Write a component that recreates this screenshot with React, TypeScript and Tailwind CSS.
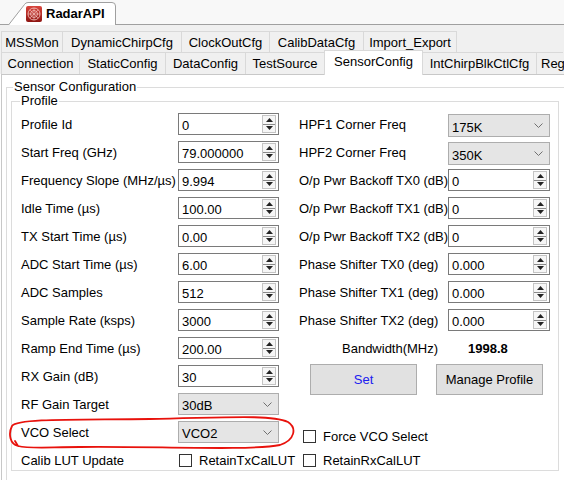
import { Fragment, type ReactNode } from 'react'

function Tri({ down }: { down?: boolean }) {
  return (
    <svg width="7" height="4" viewBox="0 0 7 4">
      <path d={down ? 'M0 0H7L3.5 4Z' : 'M0 4H7L3.5 0Z'} fill="#222" />
    </svg>
  )
}

function Spin({ value }: { value: string }) {
  return (
    <div className="flex h-[22px] w-full items-center border border-[#7a7a7a] bg-white">
      <span className="flex-1 pl-[3px] pt-[2px]">{value}</span>
      <div className="mr-[2px] flex h-[18px] w-[14px] flex-col border border-[#c4c4c4] bg-[#f6f6f6]">
        <div className="flex flex-1 items-center justify-center border-b border-[#8a8a8a]">
          <Tri />
        </div>
        <div className="flex flex-1 items-center justify-center">
          <Tri down />
        </div>
      </div>
    </div>
  )
}

function Combo({ value, hpf }: { value: string; hpf?: boolean }) {
  return (
    <div
      className={
        hpf
          ? 'mt-[3px] flex h-[23px] w-full items-center justify-between border border-[#adadad] bg-[#e5e5e5] pl-[3px] pr-[6px]'
          : 'flex h-[22px] w-full items-center justify-between border border-[#adadad] bg-[#e5e5e5] pl-[3px] pr-[6px]'
      }
    >
      <span className="pt-[3px]">{value}</span>
      <svg width="9" height="5" viewBox="0 0 9 5">
        <path d="M0.5 0.5L4.5 4.5L8.5 0.5" fill="none" stroke="#707070" />
      </svg>
    </div>
  )
}

function Check({ label }: { label: string }) {
  return (
    <div className="flex items-center gap-[7px] whitespace-nowrap">
      <span className="h-[13px] w-[13px] shrink-0 border border-[#333] bg-white" />
      <span>{label}</span>
    </div>
  )
}

function Logo() {
  return (
    <svg width="16" height="16" viewBox="0 0 16 16" className="relative">
      <defs>
        <linearGradient id="lg" x1="0" y1="0" x2="0" y2="1">
          <stop offset="0" stopColor="#d9453c" />
          <stop offset="1" stopColor="#8e1512" />
        </linearGradient>
      </defs>
      <rect width="16" height="16" rx="2" fill="url(#lg)" />
      <circle cx="8" cy="8" r="6" fill="none" stroke="#f5c9c4" strokeWidth="0.8" />
      <circle cx="8" cy="8" r="3.5" fill="none" stroke="#f5c9c4" strokeWidth="0.8" />
      <path d="M8 2V14M2 8H14M3.8 3.8L12.2 12.2M12.2 3.8L3.8 12.2" stroke="#f5c9c4" strokeWidth="0.6" />
    </svg>
  )
}

const row1 = [
  ['MSSMon', 'w-[61px]'],
  ['DynamicChirpCfg', 'w-[119px]'],
  ['ClockOutCfg', 'w-[88px]'],
  ['CalibDataCfg', 'w-[94px]'],
  ['Import_Export', 'w-[94px] border-r'],
]

const row2 = [
  ['Connection', 'w-[78px]'],
  ['StaticConfig', 'w-[86px]'],
  ['DataConfig', 'w-[80px]'],
  ['TestSource', 'w-[79px]'],
]

const left: [string, ReactNode][] = [
  ['Profile Id', <Spin value="0" />],
  ['Start Freq (GHz)', <Spin value="79.000000" />],
  ['Frequency Slope (MHz/µs)', <Spin value="9.994" />],
  ['Idle Time (µs)', <Spin value="100.00" />],
  ['TX Start Time (µs)', <Spin value="0.00" />],
  ['ADC Start Time (µs)', <Spin value="6.00" />],
  ['ADC Samples', <Spin value="512" />],
  ['Sample Rate (ksps)', <Spin value="3000" />],
]

const right: [string, ReactNode][] = [
  ['HPF1 Corner Freq', <Combo value="175K" hpf />],
  ['HPF2 Corner Freq', <Combo value="350K" hpf />],
  ['O/p Pwr Backoff TX0 (dB)', <Spin value="0" />],
  ['O/p Pwr Backoff TX1 (dB)', <Spin value="0" />],
  ['O/p Pwr Backoff TX2 (dB)', <Spin value="0" />],
  ['Phase Shifter TX0 (deg)', <Spin value="0.000" />],
  ['Phase Shifter TX1 (deg)', <Spin value="0.000" />],
  ['Phase Shifter TX2 (deg)', <Spin value="0.000" />],
]

export default function App() {
  return (
    <div className="relative h-[480px] w-[564px] overflow-hidden bg-white font-['Liberation_Sans',Arial,sans-serif] text-[13px] leading-[15px] text-black">
      {/* title tab */}
      <div className="flex h-[25px] items-end border-b border-[#a0a0a0] bg-[#f8f8f8] pl-[8px]">
        <div className="relative -mb-px flex h-[23px] w-[108px] items-center pl-[18px]">
          <svg className="absolute inset-0" width="108" height="23" viewBox="0 0 108 23">
            <path
              d="M0.5 23 L16.5 2.5 Q17.5 0.5 20 0.5 L104 0.5 Q107.5 0.5 107.5 4 L107.5 23"
              fill="#fff"
              stroke="#a0a0a0"
            />
          </svg>
          <Logo />
          <span className="relative ml-[4px] font-bold">RadarAPI</span>
        </div>
      </div>

      {/* tab strip */}
      <div className="bg-[#f0f0f0] pl-[1px] pt-[6px]">
        <div className="flex h-[21px]">
          {row1.map(([t, w]) => (
            <div key={t} className={`flex items-center justify-center border-l border-t border-[#d9d9d9] ${w}`}>
              {t}
            </div>
          ))}
        </div>
        <div className="flex h-[22px] items-end">
          {row2.map(([t, w]) => (
            <div key={t} className={`flex h-[22px] items-center justify-center border-l border-t border-[#d9d9d9] ${w}`}>
              {t}
            </div>
          ))}
          <div className="relative z-10 -mb-px flex h-[25px] w-[99px] items-center justify-center border-x border-t border-[#d9d9d9] bg-white pb-[3px]">
            SensorConfig
          </div>
          <div className="flex h-[22px] w-[113px] items-center justify-center border-t border-[#d9d9d9]">
            IntChirpBlkCtlCfg
          </div>
          <div className="flex h-[22px] w-[27px] items-center border-l border-t border-[#d9d9d9] pl-[4px]">
            Reg
          </div>
        </div>
      </div>

      {/* tab page */}
      <div className="ml-[1px] h-[406px] border-l border-t border-[#c8c8c8] bg-white pl-[4px] pt-[5px]">
        <fieldset className="h-[420px] w-[600px] border border-[#dcdcdc]">
          <legend className="ml-[6px] px-[1px] leading-[14px]">Sensor Configuration</legend>
          <fieldset className="ml-[4px] h-[377px] w-[548px] border border-[#dcdcdc]">
            <legend className="ml-[8px] px-[1px] leading-[14px]">Profile</legend>
            <div className="grid grid-cols-[157px_101px_169px_102px] grid-rows-[repeat(13,28px)] items-center pl-[9px] pt-[2px]">
              {left.map(([l, c], i) => (
                <Fragment key={l}>
                  <div>{l}</div>
                  <div>{c}</div>
                  <div className="pl-[20px] whitespace-nowrap">{right[i][0]}</div>
                  <div>{right[i][1]}</div>
                </Fragment>
              ))}

              <div>Ramp End Time (µs)</div>
              <div>
                <Spin value="200.00" />
              </div>
              <div className="pl-[63px]">Bandwidth(MHz)</div>
              <div className="pl-[20px] font-bold">1998.8</div>

              <div>RX Gain (dB)</div>
              <div>
                <Spin value="30" />
              </div>
              <div className="col-span-2 flex gap-[19px] self-start pl-[31px] pt-[2px]">
                <button className="h-[31px] w-[107px] border border-[#adadad] bg-[#e1e1e1] text-[#2020f0]">Set</button>
                <button className="h-[31px] w-[107px] border border-[#adadad] bg-[#e1e1e1]">Manage Profile</button>
              </div>

              <div>RF Gain Target</div>
              <div>
                <Combo value="30dB" />
              </div>
              <div className="col-span-2" />

              <div>VCO Select</div>
              <div>
                <Combo value="VCO2" />
              </div>
              <div className="col-span-2 pl-[24px] pt-[9px]">
                <Check label="Force VCO Select" />
              </div>

              <div>Calib LUT Update</div>
              <div className="pl-[1px]">
                <Check label="RetainTxCalLUT" />
              </div>
              <div className="col-span-2 pl-[24px]">
                <Check label="RetainRxCalLUT" />
              </div>
            </div>
          </fieldset>
        </fieldset>
      </div>

      {/* hand-drawn red mark */}
      <svg className="pointer-events-none absolute inset-0" width="564" height="480" viewBox="0 0 564 480">
        <path
          d="M18 446 C10 444, 8 434, 12 426 C18 418, 80 420, 150 419 C220 418, 270 414, 288 422 C297 428, 295 440, 280 445 C250 451, 150 446, 80 447 C50 447, 30 449, 18 446 L15 441"
          fill="none"
          stroke="#e8120c"
          strokeWidth="1.8"
          strokeLinecap="round"
        />
      </svg>
    </div>
  )
}
